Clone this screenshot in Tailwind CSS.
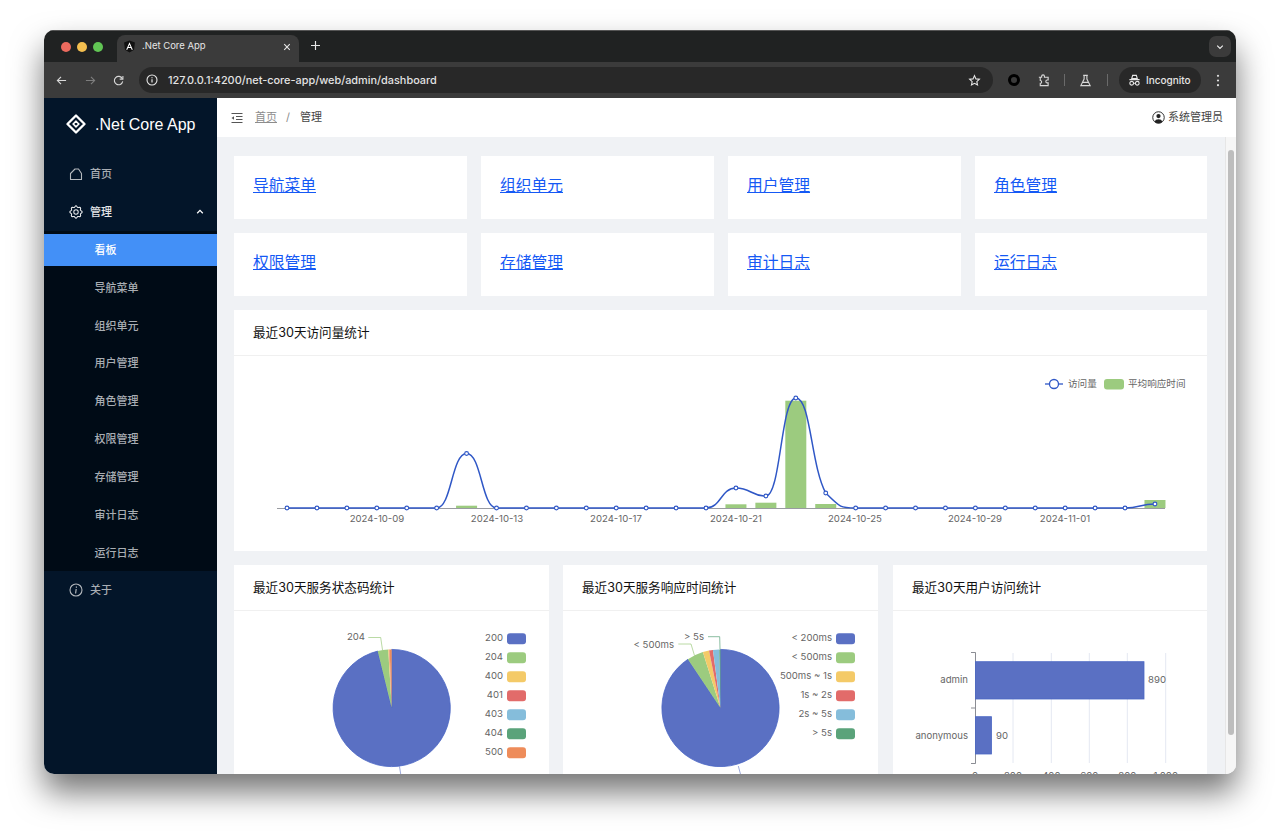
<!DOCTYPE html>
<html lang="zh-CN">
<head>
<meta charset="UTF-8">
<title>.Net Core App</title>
<script src="https://cdn.jsdelivr.net/npm/@tailwindcss/browser@4"></script>
</head>
<body class="bg-white h-[832px] overflow-hidden pt-[30px] pl-[44px] font-[Inter,'Noto_Sans_CJK_SC',sans-serif]">
<!-- browser window -->
<div class="w-[1192px] h-[744px] rounded-[10px] overflow-hidden flex flex-col shadow-[0_18px_32px_rgba(0,0,0,0.55)]">

  <!-- tab strip -->
  <div class="h-[32px] shrink-0 bg-[#202222] border-t border-[#555] flex items-end relative">
    <div class="absolute left-[17px] top-[11px] flex gap-[6px]">
      <span class="w-[10px] h-[10px] rounded-full bg-[#ec6a5e]"></span>
      <span class="w-[10px] h-[10px] rounded-full bg-[#f4bf4f]"></span>
      <span class="w-[10px] h-[10px] rounded-full bg-[#61c554]"></span>
    </div>
    <div class="ml-[73px] w-[182px] h-[27px] bg-[#3b3b3b] rounded-t-[8px] flex items-center pl-[6px] pr-[8px] pb-[4px]">
      <svg viewBox="0 0 24 24" class="w-[13px] h-[13px]"><path fill="#111" d="M12 1 2 4.6l1.6 13.2L12 23l8.4-5.2L22 4.600z"/><path fill="#fff" d="M12 4 5.800 18h2.300l1.250-3.100h5.300l1.250 3.100h2.300zm1.800 9h-3.600L12 8.600z"/></svg>
      <span class="ml-[6px] text-[9.500px] text-[#e6e6e6]">.Net Core App</span>
      <svg viewBox="0 0 10 10" class="w-[8px] h-[8px] ml-auto"><path d="M1.500 1.500l7 7m0-7l-7 7" stroke="#e6e6e6" stroke-width="1.400"/></svg>
    </div>
    <svg viewBox="0 0 10 10" class="w-[9px] h-[9px] ml-[12px] mb-[12px]"><path d="M5 0v10M0 5h10" stroke="#e6e6e6" stroke-width="1.300"/></svg>
    <div class="ml-auto mr-[5px] mb-[5px] w-[22px] h-[21px] rounded-[7px] bg-[#3b3b3b] flex items-center justify-center">
      <svg viewBox="0 0 10 10" class="w-[8px] h-[8px]"><path d="M1.500 3.200 5 6.700l3.500-3.500" fill="none" stroke="#eee" stroke-width="1.500"/></svg>
    </div>
  </div>

  <!-- toolbar -->
  <div class="h-[36px] shrink-0 bg-[#3b3b3b] flex items-center text-[#dcdcdc]">
    <svg viewBox="0 0 12 12" class="w-[11px] h-[11px] ml-[12px]"><path d="M11 6H1.500M5.500 2 1.500 6l4 4" fill="none" stroke="#d8d8d8" stroke-width="1.200"/></svg>
    <svg viewBox="0 0 12 12" class="w-[11px] h-[11px] ml-[18px]"><path d="M1 6h9.500M6.500 2l4 4-4 4" fill="none" stroke="#7d7d7d" stroke-width="1.200"/></svg>
    <svg viewBox="0 0 12 12" class="w-[11px] h-[11px] ml-[17px]"><path d="M10.200 4A4.600 4.600 0 1 0 10.600 7" fill="none" stroke="#d8d8d8" stroke-width="1.200"/><path d="M10.800 1v3.500H7.300" fill="none" stroke="#d8d8d8" stroke-width="1.200"/></svg>
    <!-- omnibox -->
    <div class="ml-[15px] w-[854px] h-[26px] rounded-full bg-[#282828] flex items-center pl-[7px] pr-[12px]">
      <svg viewBox="0 0 12 12" class="w-[12px] h-[12px]"><circle cx="6" cy="6" r="5" fill="none" stroke="#e8e8e8" stroke-width="1.100"/><path d="M6 5.200v3.300M6 3.200v1" stroke="#e8e8e8" stroke-width="1.200"/></svg>
      <span class="ml-[10px] text-[10.900px] font-medium text-[#e3e3e3]">127.0.0.1:4200/net-core-app/web/admin/dashboard</span>
      <svg viewBox="0 0 24 24" class="w-[13px] h-[13px] ml-auto"><path d="m12 3 2.700 6 6.300.7-4.700 4.300 1.300 6.400L12 17.200l-5.600 3.200L7.700 14 3 9.700 9.300 9z" fill="none" stroke="#e6e6e6" stroke-width="2"/></svg>
    </div>
    <span class="ml-[15px] w-[12px] h-[12px] rounded-full border-[3px] border-black"></span>
    <svg viewBox="0 0 14 14" class="w-[13px] h-[13px] ml-[17px]"><path d="M2 3.500h3V2.500a1.500 1.500 0 0 1 3 0v1h4v3h-1a1.500 1.500 0 0 0 0 3h1v3H3.500v-2.500a1.500 1.500 0 0 0 0-3V3.500z" fill="none" stroke="#d8d8d8" stroke-width="1.200"/></svg>
    <span class="ml-[14px] w-px h-[12px] bg-[#6a6a6a]"></span>
    <svg viewBox="0 0 14 14" class="w-[13px] h-[13px] ml-[14px]"><path d="M4.500 1.500h5M5.500 1.500v4L2 12.500h10L8.500 5.500v-4M4 9h6" fill="none" stroke="#d8d8d8" stroke-width="1.200"/></svg>
    <span class="ml-[15px] w-px h-[12px] bg-[#6a6a6a]"></span>
    <div class="ml-[11px] w-[82px] h-[26px] rounded-full bg-[#282828] flex items-center pl-[9px]">
      <svg viewBox="0 0 14 14" class="w-[13px] h-[13px]"><path d="M4 5l1-3.500h4L10 5zM1.500 6h11" fill="none" stroke="#e6e6e6" stroke-width="1.200"/><circle cx="4" cy="10" r="2" fill="none" stroke="#e6e6e6" stroke-width="1.200"/><circle cx="10" cy="10" r="2" fill="none" stroke="#e6e6e6" stroke-width="1.200"/><path d="M6 10h2" stroke="#e6e6e6"/></svg>
      <span class="ml-[5px] text-[10px] font-medium text-[#e6e6e6]">Incognito</span>
    </div>
    <svg viewBox="0 0 4 14" class="w-[4px] h-[13px] ml-[15px]"><circle cx="2" cy="2" r="1.200" fill="#ddd"/><circle cx="2" cy="7" r="1.200" fill="#ddd"/><circle cx="2" cy="12" r="1.200" fill="#ddd"/></svg>
  </div>

  <!-- page -->
  <div class="flex-1 flex min-h-0">
    <!-- sidebar -->
    <aside class="w-[173px] shrink-0 bg-[#031529] text-[11px] font-medium text-[#a8adb3]">
      <div class="h-[52px] flex items-center pl-[22px]">
        <svg viewBox="0 0 20 20" class="w-[20px] h-[20px]"><path d="M10 1.500 18.500 10 10 18.500 1.500 10z" fill="none" stroke="#fff" stroke-width="2.300" stroke-linejoin="round"/><path d="M10 7.200 12.800 10 10 12.800 7.200 10z" fill="none" stroke="#fff" stroke-width="1.600"/></svg>
        <span class="ml-[9px] pt-[2px] text-[16px] font-normal text-white font-['Liberation_Sans',sans-serif]">.Net Core App</span>
      </div>
      <nav class="pt-[8px]">
        <a class="h-[32px] mb-[6px] flex items-center pl-[25px]">
          <svg viewBox="0 0 14 14" class="w-[14px] h-[14px]"><path d="M1.500 12.500V6.500L6 2h3.500l3 4.500v6z" fill="none" stroke="#b4b8bd" stroke-width="1.100" stroke-linejoin="round"/></svg>
          <span class="ml-[7px]">首页</span>
        </a>
        <a class="h-[32px] flex items-center pl-[25px] pr-[13px] text-[#e4e6e8]">
          <svg viewBox="-7 -7 14 14" class="w-[14px] h-[14px]"><path id="gear" fill="none" stroke="#e4e6e8" stroke-width="1.100" stroke-linejoin="round"/><circle r="2.200" fill="none" stroke="#e4e6e8" stroke-width="1.100"/></svg>
          <span class="ml-[7px]">管理</span>
          <svg viewBox="0 0 10 10" class="w-[8px] h-[8px] ml-auto"><path d="M1.500 6.500 5 3l3.500 3.500" fill="none" stroke="#fff" stroke-width="1.600"/></svg>
        </a>
        <div class="mt-[3px] bg-[#000b16] pt-[3px] pb-[2px]">
          <a class="h-[32px] mb-[5.900px] flex items-center pl-[50.500px] bg-[#4390f7] text-white">看板</a>
          <a class="h-[32px] mb-[5.900px] flex items-center pl-[50.500px]">导航菜单</a>
          <a class="h-[32px] mb-[5.900px] flex items-center pl-[50.500px]">组织单元</a>
          <a class="h-[32px] mb-[5.900px] flex items-center pl-[50.500px]">用户管理</a>
          <a class="h-[32px] mb-[5.900px] flex items-center pl-[50.500px]">角色管理</a>
          <a class="h-[32px] mb-[5.900px] flex items-center pl-[50.500px]">权限管理</a>
          <a class="h-[32px] mb-[5.900px] flex items-center pl-[50.500px]">存储管理</a>
          <a class="h-[32px] mb-[5.900px] flex items-center pl-[50.500px]">审计日志</a>
          <a class="h-[32px] flex items-center pl-[50.500px]">运行日志</a>
        </div>
        <a class="h-[32px] mt-[3px] flex items-center pl-[25px]">
          <svg viewBox="0 0 14 14" class="w-[14px] h-[14px]"><circle cx="7" cy="7" r="6" fill="none" stroke="#b4b8bd" stroke-width="1.100"/><path d="M7.200 6 6.600 10.500M7.400 3.400v1.300" stroke="#b4b8bd" stroke-width="1.200"/></svg>
          <span class="ml-[7px]">关于</span>
        </a>
      </nav>
    </aside>

    <!-- main -->
    <main class="flex-1 min-w-0 flex flex-col bg-[#f0f2f5]">
      <header class="h-[39px] shrink-0 bg-white flex items-center pl-[14px] pr-[13px] text-[11px] text-[#444]">
        <svg viewBox="0 0 12 12" class="w-[12px] h-[12px]"><path d="M.500 1.500h11M5 4.500h6.500M5 7.500h6.500M.500 10.500h11" stroke="#555" stroke-width="1"/><path d="M3 4.200v3.600L.500 6z" fill="#555"/></svg>
        <span class="ml-[12px] text-[#8c8c8c] underline">首页</span>
        <span class="ml-[9px] mr-[10px] text-[#8c8c8c]">/</span>
        <span>管理</span>
        <svg viewBox="0 0 14 14" class="w-[13px] h-[13px] ml-auto"><circle cx="7" cy="7" r="6.200" fill="none" stroke="#222" stroke-width="1"/><circle cx="7" cy="5.500" r="2.300" fill="#222"/><path d="M2.800 11.500a4.300 3.300 0 0 1 8.400 0A6.200 6.200 0 0 1 2.800 11.500z" fill="#222"/></svg>
        <span class="ml-[3px]">系统管理员</span>
      </header>

      <div class="flex-1 min-h-0 flex overflow-hidden">
        <div class="flex-1 min-w-0 pl-[17px] pr-[18px] pt-[19px]">
          <div class="grid grid-cols-[233px_233px_233px_232px] gap-[14px] text-[15.750px] text-[#1559f5]">
            <div class="h-[63px] bg-white pl-[19px] pb-[4px] flex items-center"><a class="underline">导航菜单</a></div>
            <div class="h-[63px] bg-white pl-[19px] pb-[4px] flex items-center"><a class="underline">组织单元</a></div>
            <div class="h-[63px] bg-white pl-[19px] pb-[4px] flex items-center"><a class="underline">用户管理</a></div>
            <div class="h-[63px] bg-white pl-[19px] pb-[4px] flex items-center"><a class="underline">角色管理</a></div>
            <div class="h-[63px] bg-white pl-[19px] pb-[4px] flex items-center"><a class="underline">权限管理</a></div>
            <div class="h-[63px] bg-white pl-[19px] pb-[4px] flex items-center"><a class="underline">存储管理</a></div>
            <div class="h-[63px] bg-white pl-[19px] pb-[4px] flex items-center"><a class="underline">审计日志</a></div>
            <div class="h-[63px] bg-white pl-[19px] pb-[4px] flex items-center"><a class="underline">运行日志</a></div>
          </div>

          <section class="mt-[14px] bg-white">
            <div class="h-[46px] border-b border-[#f0f0f0] pl-[19px] pt-[2px] flex items-center text-[12.600px] text-[#111]">最近30天访问量统计</div>
            <svg id="visit-chart" viewBox="234 356 973 195" class="block w-[973px] h-[195px]"></svg>
          </section>

          <div class="mt-[14px] flex">
            <section class="w-[315px] bg-white">
              <div class="h-[46px] border-b border-[#f0f0f0] pl-[19px] pt-[2px] flex items-center text-[12.600px] text-[#111]">最近30天服务状态码统计</div>
              <svg id="status-chart" viewBox="234 611 315 200" class="block w-full h-[200px]"></svg>
            </section>
            <section class="w-[315px] ml-[14px] bg-white">
              <div class="h-[46px] border-b border-[#f0f0f0] pl-[19px] pt-[2px] flex items-center text-[12.600px] text-[#111]">最近30天服务响应时间统计</div>
              <svg id="time-chart" viewBox="563 611 315 200" class="block w-full h-[200px]"></svg>
            </section>
            <section class="w-[314px] ml-[15px] bg-white">
              <div class="h-[46px] border-b border-[#f0f0f0] pl-[19px] pt-[2px] flex items-center text-[12.600px] text-[#111]">最近30天用户访问统计</div>
              <svg id="user-chart" viewBox="893 611 314 200" class="block w-full h-[200px]"></svg>
            </section>
          </div>
        </div>
        <!-- scrollbar -->
        <div class="w-[11px] shrink-0 bg-[#f6f6f6] border-l border-[#e6e6e6] pl-[2px] pt-[13px]">
          <div class="w-[6px] h-[585px] rounded-full bg-[#bdbdbd]"></div>
        </div>
      </div>
    </main>
  </div>
</div>

<script>
const BLUE = '#5a70c3', LINE = '#2f57c6', GREEN = '#9ccb7f', YELLOW = '#f4ca68', RED = '#e26b6a',
      SKY = '#85bddb', DGREEN = '#5aa37a', ORANGE = '#ee8c5a', AXIS = '#6e7079', INK = '#666';

// sidebar gear outline, eight lobes
let gear = '';
for (let i = 0; i < 48; i++) {
  const a = i / 48 * 2 * Math.PI, r = 5.500 + 0.700 * Math.cos(a * 8);
  gear += (i ? 'L' : 'M') + (r * Math.sin(a)).toFixed(2) + ' ' + (-r * Math.cos(a)).toFixed(2);
}
document.getElementById('gear').setAttribute('d', gear + 'Z');

function label(x, y, text, anchor) {
  return `<text x="${x}" y="${y}" font-size="9.600" fill="${INK}" text-anchor="${anchor || 'middle'}" dominant-baseline="middle">${text}</text>`;
}

// line + bar chart
const baseY = 508, x0 = 287, step = 29.93;
const lineY = {6: 453.500, 15: 488, 16: 496, 17: 398, 18: 493, 29: 504};
const barTop = {6: 505.700, 15: 504.300, 16: 502.700, 17: 400.700, 18: 504, 29: 500};
const pts = [];
for (let i = 0; i < 30; i++) pts.push([x0 + i * step, lineY[i] || baseY]);

function tangent(i) {
  if (i === 0 || i === pts.length - 1) return 0;
  const a = pts[i - 1][1], b = pts[i][1], c = pts[i + 1][1];
  if ((b - a) * (c - b) <= 0) return 0;
  return (c - a) / (2 * step);
}
let linePath = `M${pts[0][0]} ${pts[0][1]}`;
for (let i = 0; i < 29; i++) {
  const [xa, ya] = pts[i], [xb, yb] = pts[i + 1];
  const lo = Math.min(ya, yb), hi = Math.max(ya, yb);
  const c1 = Math.min(hi, Math.max(lo, ya + tangent(i) * step * 0.5));
  const c2 = Math.min(hi, Math.max(lo, yb - tangent(i + 1) * step * 0.5));
  linePath += ` C${xa + step * 0.5} ${c1} ${xb - step * 0.5} ${c2} ${xb} ${yb}`;
}
let visit = `<path d="M277 508.500H1165" stroke="${AXIS}" stroke-opacity=".7"/>`;
for (const i in barTop) {
  const cx = x0 + i * step;
  visit += `<rect x="${cx - 10.500}" y="${barTop[i]}" width="21" height="${baseY - barTop[i]}" fill="${GREEN}"/>`;
}
visit += `<path d="${linePath}" fill="none" stroke="${LINE}" stroke-width="1.500"/>`;
pts.forEach(p => { visit += `<circle cx="${p[0]}" cy="${p[1]}" r="1.900" fill="#fff" stroke="${LINE}" stroke-width="1.100"/>`; });
[[377, '2024-10-09'], [497, '2024-10-13'], [616, '2024-10-17'], [736, '2024-10-21'], [855, '2024-10-25'], [975, '2024-10-29'], [1065, '2024-11-01']].forEach(([x, t]) => {
  visit += label(x, 519.500, t);
});
visit += `<path d="M1045 384h18" stroke="${LINE}" stroke-width="1.300"/><circle cx="1054" cy="384" r="4.500" fill="#fff" stroke="${LINE}" stroke-width="1.300"/>`;
visit += label(1068, 384, '访问量', 'start');
visit += `<rect x="1104" y="379" width="20" height="10.500" rx="3" fill="${GREEN}"/>`;
visit += label(1128, 384, '平均响应时间', 'start');
document.getElementById('visit-chart').innerHTML = visit;

// pies: slices are [from, to, colour] in degrees, clockwise from the top
function slice(cx, cy, r, from, to, fill) {
  const pt = a => [cx + r * Math.sin(a * Math.PI / 180), cy - r * Math.cos(a * Math.PI / 180)];
  const [ax, ay] = pt(from), [bx, by] = pt(to);
  const stroke = fill === BLUE ? ' stroke="#4a66c4" stroke-width=".8"' : '';
  return `<path d="M${cx} ${cy}L${ax} ${ay}A${r} ${r} 0 ${to - from > 180 ? 1 : 0} 1 ${bx} ${by}Z" fill="${fill}"${stroke}/>`;
}
function legend(items, textX, swatchX) {
  return items.map(([t, c], i) => {
    const y = 638.700 + i * 19;
    return label(textX, y, t, 'end') + `<rect x="${swatchX}" y="${y - 5.500}" width="19" height="11" rx="3" fill="${c}"/>`;
  }).join('');
}

let status = '';
[[0, 346.200, BLUE], [346.200, 356.600, GREEN], [356.600, 357.500, YELLOW], [357.500, 358, RED], [358, 360, ORANGE]].forEach(s => {
  status += slice(391.700, 708, 58.600, s[0], s[1], s[2]);
});
status += `<path d="M368.300 637.500H380.700L382.500 650" fill="none" stroke="${GREEN}" stroke-opacity=".7"/>`;
status += `<path d="M399.500 766.500L401 776" fill="none" stroke="${BLUE}" stroke-opacity=".6"/>`;
status += label(365, 637.700, '204', 'end');
status += legend([['200', BLUE], ['204', GREEN], ['400', YELLOW], ['401', RED], ['403', SKY], ['404', DGREEN], ['500', ORANGE]], 503, 507);
document.getElementById('status-chart').innerHTML = status;

let time = '';
[[0, 326.200, BLUE], [326.200, 342.500, GREEN], [342.500, 348.700, YELLOW], [348.700, 352.600, RED], [352.600, 358.800, SKY], [358.800, 360, DGREEN]].forEach(s => {
  time += slice(720.500, 708, 58.600, s[0], s[1], s[2]);
});
time += `<path d="M678.300 644H691L694.500 655.600" fill="none" stroke="${GREEN}" stroke-opacity=".7"/>`;
time += `<path d="M708 636.700H719.700L720 649" fill="none" stroke="${DGREEN}" stroke-opacity=".7"/>`;
time += `<path d="M738.300 766L741 776" fill="none" stroke="${BLUE}" stroke-opacity=".6"/>`;
time += label(674, 645, '&lt; 500ms', 'end');
time += label(704, 637.500, '&gt; 5s', 'end');
time += label(778, 779, '926');
time += legend([['&lt; 200ms', BLUE], ['&lt; 500ms', GREEN], ['500ms ~ 1s', YELLOW], ['1s ~ 2s', RED], ['2s ~ 5s', SKY], ['&gt; 5s', DGREEN]], 832, 836);
document.getElementById('time-chart').innerHTML = time;

// horizontal bars
let users = '';
[[1013, '200'], [1051.300, '400'], [1089.300, '600'], [1127.300, '800'], [1165.700, '1,000']].forEach(([x, t]) => {
  users += `<path d="M${x} 653V763" stroke="#e4e8f2"/>` + label(x, 776.500, t);
});
users += label(975, 776.500, '0');
users += `<path d="M971 652.500H975.500V763.500H971M971 708H975" fill="none" stroke="${AXIS}" stroke-opacity=".8"/>`;
users += `<rect x="975.500" y="661.700" width="168.500" height="37.300" fill="${BLUE}" stroke="#4a66c4" stroke-width=".8"/>`;
users += `<rect x="975.500" y="716.700" width="16" height="37.300" fill="${BLUE}" stroke="#4a66c4" stroke-width=".8"/>`;
users += label(968, 680.500, 'admin', 'end') + label(968, 736, 'anonymous', 'end');
users += label(1148, 680.500, '890', 'start') + label(996, 736, '90', 'start');
document.getElementById('user-chart').innerHTML = users;
</script>
</body>
</html>
